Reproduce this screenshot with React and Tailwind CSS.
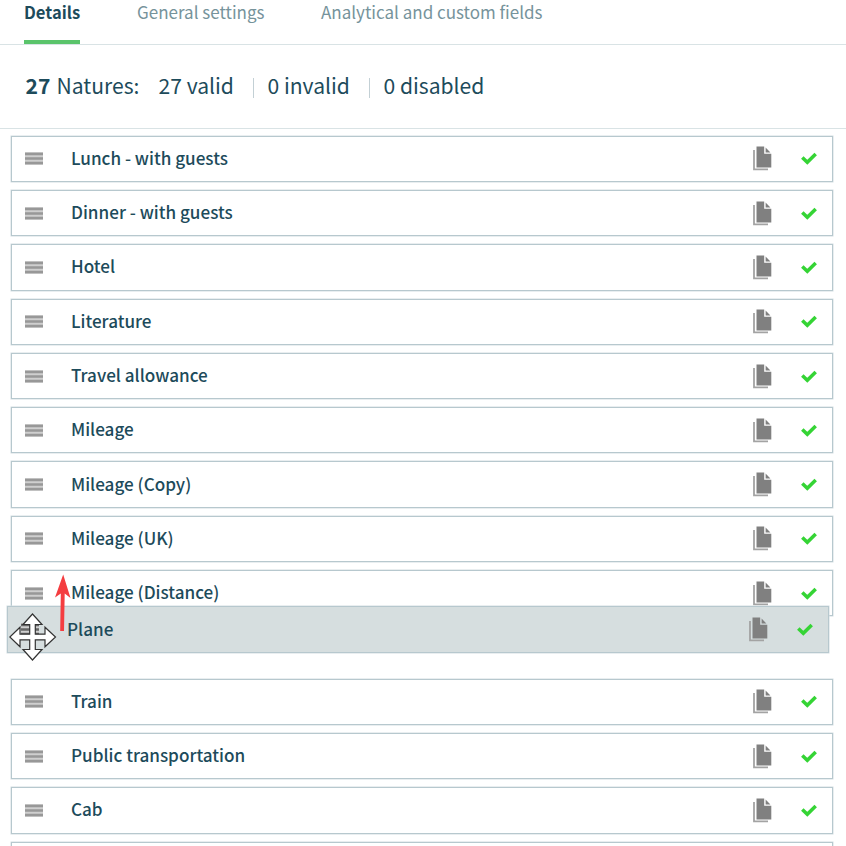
const TABS = ['General settings', 'Analytical and custom fields'];

const NATURES = [
    'Lunch - with guests',
    'Dinner - with guests',
    'Hotel',
    'Literature',
    'Travel allowance',
    'Mileage',
    'Mileage (Copy)',
    'Mileage (UK)',
    'Mileage (Distance)',
    null, // slot left empty by the dragged row
    'Train',
    'Public transportation',
    'Cab',
    '',
];

function GripIcon({ className }) {
    return (
        <svg width="18" height="13" viewBox="0 0 18 13" className={`shrink-0 ${className}`}>
            <rect width="18" height="13" fill="#cfcfcf" />
            <path d="M0 2h18M0 6.5h18M0 11h18" stroke="currentColor" strokeWidth="2.4" />
        </svg>
    );
}

function CopyIcon() {
    return (
        <svg width="19" height="25" viewBox="0 0 19 25" className="shrink-0">
            <path d="M1 4v19.3h14" fill="none" stroke="#a3a3a3" strokeWidth="1.8" />
            <path d="M3.5 .5h7.7v7.2h7.1v13.8H3.5z" fill="#808080" />
            <path d="M12.6 1.5l4.8 4.9h-4.8z" fill="#808080" />
        </svg>
    );
}

function CheckIcon() {
    return (
        <svg width="16" height="13" viewBox="0 0 16 13" className="shrink-0">
            <path d="M1.3 5.4l5 4.9 8.4-8.4" fill="none" stroke="#35d435" strokeWidth="3.5" />
        </svg>
    );
}

function NatureRow({ name, className, gripClass = 'text-[#989898]' }) {
    return (
        <div className={`flex h-[46.3px] w-[822px] items-center border border-[#b7c8ce] pl-[13px] shadow-[0_0_0_0.5px_#d3dee1] ${className}`}>
            <GripIcon className={gripClass} />
            <span className="mb-[2px] ml-[28px] flex-1 text-[17.1px] leading-6 font-medium whitespace-nowrap">{name}</span>
            <CopyIcon />
            <span className="mr-[15px] ml-[29px]">
                <CheckIcon />
            </span>
        </div>
    );
}

export default function App() {
    return (
        <div className="relative h-[846px] w-[846px] overflow-hidden bg-white font-['Noto_Sans_CJK_SC',sans-serif] text-[#1d4b5b]">
            {/* Tabs */}
            <nav className="flex h-[44.5px] border-b border-[#d9e3e5] pl-6 text-[17px] leading-6">
                <span className="mr-[57px] h-[43.5px] w-14 border-b-4 border-[#5ac46b] text-[16.6px] font-bold">Details</span>
                <span className="w-[184px] text-[#76939b]">{TABS[0]}</span>
                <span className="text-[#76939b]">{TABS[1]}</span>
            </nav>

            {/* Counters */}
            <div className="flex h-[84px] items-center border-b border-[#d9e3e5] pl-[25.5px] text-[21.1px] leading-7 whitespace-nowrap">
                <span className="mb-[2px] w-[31px] font-bold">27</span>
                <span className="mb-[2px] w-[102px]">Natures:</span>
                <span className="mb-[2px] w-[94px]">27 valid</span>
                <span className="mt-1 mr-[14px] h-5 w-px bg-[#c3d0d5]" />
                <span className="mb-[2px] w-[101px]">0 invalid</span>
                <span className="mt-1 mr-[14px] h-5 w-px bg-[#c3d0d5]" />
                <span className="mb-[2px]">0 disabled</span>
            </div>

            {/* Nature list */}
            <div className="flex flex-col gap-2 pt-[7.2px] pl-[11px]">
                {NATURES.map((name, i) => (
                    name === null
                        ? <div key={i} className="h-[46.3px] shrink-0" />
                        : <NatureRow key={i} name={name} className="shrink-0 bg-white" />
                ))}
            </div>

            {/* Row being dragged */}
            <NatureRow name="Plane" className="absolute top-[606.4px] left-[7px] bg-[#d6dedf]" gripClass="text-[#666]" />

            <svg width="16" height="58" viewBox="0 0 16 58" className="absolute top-[574px] left-[55px]">
                <path d="M8.2 .5L15.5 24 9.7 19.5 9 57H5.2L5.8 19.5 0 23.5z" fill="#f43d40" />
            </svg>

            <svg width="48" height="48" viewBox="0 0 48 48" className="absolute top-[613px] left-[9px]">
                <path
                    d="M23.5 1L33 11.5H26.3V21.2H36V14.2L46.5 24 36 33.8V26.8H26.3V36.5H33L23.5 47 14 36.5H20.7V26.8H11V33.8L.8 24 11 14.2V21.2H20.7V11.5H14z"
                    fill="white"
                    stroke="#333"
                    strokeWidth="1.2"
                />
            </svg>
        </div>
    );
}
